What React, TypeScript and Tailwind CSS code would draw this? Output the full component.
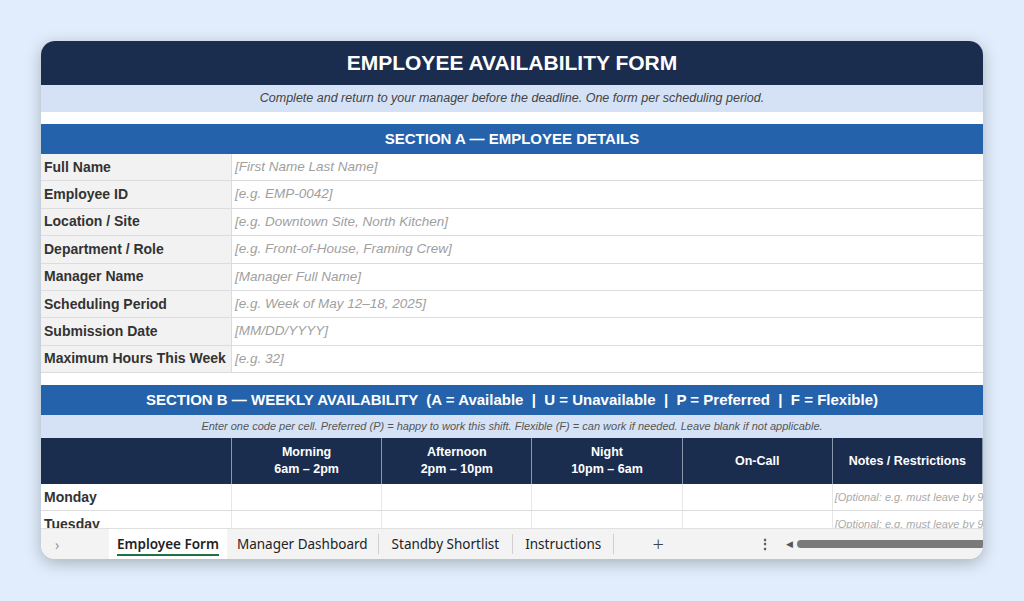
import React from "react";

const rowsA: [string, string][] = [
  ["Full Name", "[First Name Last Name]"],
  ["Employee ID", "[e.g. EMP-0042]"],
  ["Location / Site", "[e.g. Downtown Site, North Kitchen]"],
  ["Department / Role", "[e.g. Front-of-House, Framing Crew]"],
  ["Manager Name", "[Manager Full Name]"],
  ["Scheduling Period", "[e.g. Week of May 12–18, 2025]"],
  ["Submission Date", "[MM/DD/YYYY]"],
  ["Maximum Hours This Week", "[e.g. 32]"],
];

const cols: [string, string | null][] = [
  ["Morning", "6am – 2pm"],
  ["Afternoon", "2pm – 10pm"],
  ["Night", "10pm – 6am"],
  ["On-Call", null],
  ["Notes / Restrictions", null],
];

export default function App() {
  return (
    <div className="w-[1024px] h-[601px] bg-[#e1edfc] pt-[41px] pl-[41px]" style={{ fontFamily: "'Liberation Sans', Arial, sans-serif" }}>
      <div className="w-[942px] h-[518px] rounded-[14px] overflow-hidden bg-white shadow-[0_4px_16px_rgba(0,0,0,0.25)] flex flex-col">
        <div className="h-[490px] overflow-hidden flex flex-col">
          <div className="h-[44px] shrink-0 bg-[#1b2d4f] text-white font-bold text-[21px] flex items-center justify-center">EMPLOYEE AVAILABILITY FORM</div>
          <div className="h-[27px] shrink-0 bg-[#d5e2f5] text-[#444] italic text-[12.5px] flex items-center justify-center">Complete and return to your manager before the deadline. One form per scheduling period.</div>
          <div className="h-[12px] shrink-0" />
          <div className="h-[30px] shrink-0 bg-[#2462ac] text-white font-bold text-[15px] flex items-center justify-center">SECTION A — EMPLOYEE DETAILS</div>
          {rowsA.map(([l, v]) => (
            <div key={l} className="h-[27.4px] shrink-0 flex border-b border-[#dcdcdc]">
              <div className="w-[191px] shrink-0 bg-[#f2f2f2] border-r border-[#dcdcdc] font-bold text-[14px] text-[#333] pl-[3px] flex items-center">{l}</div>
              <div className="flex-1 italic text-[13.5px] text-[#a0a0a0] pl-[3px] flex items-center">{v}</div>
            </div>
          ))}
          <div className="h-[12px] shrink-0" />
          <div className="h-[30px] shrink-0 bg-[#2462ac] text-white font-bold text-[15px] flex items-center justify-center whitespace-pre">SECTION B — WEEKLY AVAILABILITY  (A = Available  |  U = Unavailable  |  P = Preferred  |  F = Flexible)</div>
          <div className="h-[23px] shrink-0 bg-[#d5e2f5] text-[#555] italic text-[11px] flex items-center justify-center">Enter one code per cell. Preferred (P) = happy to work this shift. Flexible (F) = can work if needed. Leave blank if not applicable.</div>
          <div className="h-[46px] shrink-0 flex bg-[#1b2d4f] text-white font-bold text-[12.5px]">
            <div className="w-[191px] shrink-0 border-r border-[#8a96aa]" />
            {cols.map(([a, b]) => (
              <div key={a} className="w-[150.2px] shrink-0 border-r border-[#8a96aa] flex flex-col items-center justify-center leading-[17px]">
                <div>{a}</div>{b && <div>{b}</div>}
              </div>
            ))}
          </div>
          {["Monday", "Tuesday"].map((d) => (
            <div key={d} className="h-[27px] shrink-0 flex border-b border-[#dcdcdc]">
              <div className="w-[191px] shrink-0 font-bold text-[14px] text-[#333] pl-[3px] flex items-center border-r border-[#e6e6e6]">{d}</div>
              {[0, 1, 2, 3].map((i) => <div key={i} className="w-[150.2px] shrink-0 border-r border-[#e6e6e6]" />)}
              <div className="flex-1 italic text-[11px] text-[#aaa] pl-[2px] flex items-center whitespace-nowrap overflow-hidden">[Optional: e.g. must leave by 9</div>
            </div>
          ))}
        </div>
        <div className="flex-1 bg-[#f3f3f3] border-t border-[#e0e0e0] flex items-center text-[13.5px] text-[#222]" style={{ fontFamily: "'Noto Sans', sans-serif" }}>
          <div className="w-[68px] pl-[14px] text-[#999] text-[14px]">›</div>
          <div className="h-full bg-white px-[8px] flex items-center font-semibold relative">Employee Form<div className="absolute left-[8px] right-[8px] bottom-[3px] h-[2px] bg-[#1e7145]" /></div>
          <div className="px-[10px] border-r border-[#d0d0d0]">Manager Dashboard</div>
          <div className="px-[13px] border-r border-[#d0d0d0]">Standby Shortlist</div>
          <div className="px-[12px] border-r border-[#d0d0d0]">Instructions</div>
          <div className="w-[88px] text-center text-[20px] text-[#444] font-light">+</div>
          <div className="ml-[56px] text-[#555] font-bold">⋮</div>
          <div className="ml-[14px] text-[#555] text-[9px]">◀</div>
          <div className="ml-[4px] flex-1 h-[8px] bg-[#7a7a7a] rounded-l-full" />
        </div>
      </div>
    </div>
  );
}
